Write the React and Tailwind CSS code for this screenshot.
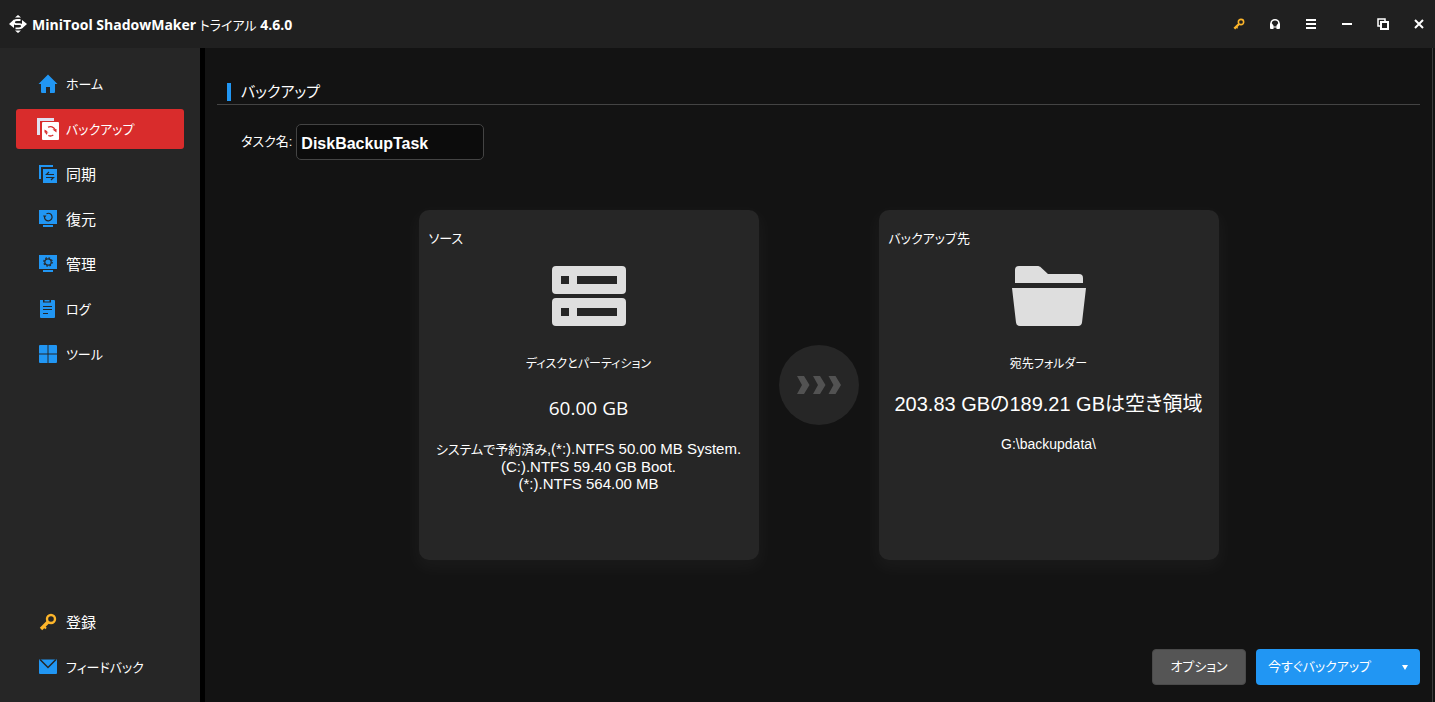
function Logo() {
  return (
    <svg width="18" height="18" viewBox="0 0 18 18" fill="#fff" aria-hidden="true">
      <path d="M6 2.500 9 0l3 2.500zM6 15.500 9 18l3-2.500z" />
      <path d="M0 9 5 4.500V13zM18 9l-5 4.500V5z" />
      <path d="M11.500 5H8C6 5 5 6 5 7.300S6 9.200 7.500 9.200h3c1.500 0 2.500.5 2.500 1.800s-1 2.300-3 2.300H6.500" fill="none" stroke="#fff" strokeWidth="1.800" />
    </svg>
  )
}

function KeyIcon({ size }) {
  return (
    <svg width={size} height={size} viewBox="0 0 18 18" fill="none" stroke="#fdb52a" aria-hidden="true">
      <circle cx="12" cy="6" r="4" strokeWidth="2.400" />
      <path d="M9 9 2 16" strokeWidth="3.400" />
      <path d="m4.500 13 2.500 2.500" strokeWidth="2" />
    </svg>
  )
}

function HomeIcon() {
  return (
    <svg width="20" height="20" viewBox="0 0 20 20" fill="#2196f3" aria-hidden="true">
      <path d="M10 .5.500 10H3v7.500c0 1 .5 1.500 1.500 1.500H8v-6h4v6h3.500c1 0 1.500-.5 1.500-1.500V10h2.500z" />
    </svg>
  )
}

function BackupIcon() {
  return (
    <svg width="22" height="22" viewBox="0 0 22 22" aria-hidden="true">
      <path d="M0 0h17v3H3v14H0z" fill="#e0e0f0" />
      <rect x="5" y="4" width="17" height="18" rx="1" fill="#fff" />
      <path d="M11 9.200a5 5 0 0 1 7 2.300M8.700 12.500a5 5 0 0 0 1.300 3.700M16.300 17a5 5 0 0 1-5 .5" fill="none" stroke="#d92c2c" strokeWidth="1.300" />
      <path d="m15.500 11.500 4 3v-3.500zM11.500 14.500 7.500 11.500v3z" fill="#d92c2c" />
    </svg>
  )
}

function SyncIcon() {
  return (
    <svg width="18" height="18" viewBox="0 0 18 18" aria-hidden="true">
      <path d="M0 0h14v2H2v12H0z" fill="#2196f3" />
      <path d="M4 4h14v14H4z" fill="#2196f3" />
      <path d="M15 9.500H7.500L10 7M7 12.500h7.500L12 15" fill="none" stroke="#262626" strokeWidth="1.200" />
    </svg>
  )
}

function RestoreIcon() {
  return (
    <svg width="18" height="18" viewBox="0 0 18 18" aria-hidden="true">
      <path d="M0 0h18v14H0zM4 15h10v2H4z" fill="#2196f3" />
      <path d="M7.500 3.700a3.800 3.800 0 1 1-2 3" fill="none" stroke="#262626" strokeWidth="1.200" />
      <path d="M4 5.500h3.500L5.500 8z" fill="#262626" />
    </svg>
  )
}

function ManageIcon() {
  return (
    <svg width="18" height="18" viewBox="0 0 18 18" aria-hidden="true">
      <path d="M0 0h18v14H0zM4 15h10v2H4z" fill="#2196f3" />
      <circle cx="9" cy="7" r="3.200" fill="none" stroke="#262626" strokeWidth="1.200" />
      <circle cx="9" cy="7" r="4.200" fill="none" stroke="#262626" strokeWidth="1.200" strokeDasharray="1.650 1.650" />
    </svg>
  )
}

function LogIcon() {
  return (
    <svg width="18" height="18" viewBox="0 0 18 18" aria-hidden="true">
      <path d="M1 0h3v2.500h8V0h3a1 1 0 0 1 1 1v16a1 1 0 0 1-1 1H2a1 1 0 0 1-1-1zM5.500 0h5v1.500h-5z" fill="#2196f3" />
      <path d="M4 6.500h9M4 9.500h9M4 13.500h5" stroke="#262626" strokeWidth="1.200" />
    </svg>
  )
}

function ToolsIcon() {
  return (
    <svg width="18" height="18" viewBox="0 0 18 18" fill="#2196f3" aria-hidden="true">
      <path d="M0 1a1 1 0 0 1 1-1h7.500v8.500H0zM9.500 0H17a1 1 0 0 1 1 1v7.500H9.500zM0 9.500h8.500V18H1a1 1 0 0 1-1-1zM9.500 9.500H18V17a1 1 0 0 1-1 1H9.500z" />
    </svg>
  )
}

function MailIcon() {
  return (
    <svg width="18" height="16" viewBox="0 0 18 16" aria-hidden="true">
      <path d="M0 .5h18V14a1 1 0 0 1-1 1H1a1 1 0 0 1-1-1z" fill="#2196f3" />
      <path d="m1 .5 8 8 8-8" fill="none" stroke="#262626" strokeWidth="1.500" />
    </svg>
  )
}

function DiskIcon() {
  return (
    <svg width="74" height="60" viewBox="0 0 74 60" fill="#dedede" fillRule="evenodd" aria-hidden="true">
      <path d="M4 0h66a4 4 0 0 1 4 4v20a4 4 0 0 1-4 4H4a4 4 0 0 1-4-4V4a4 4 0 0 1 4-4zM9 10v8h8v-8zM25 10v8h40v-8z" />
      <path d="M4 32h66a4 4 0 0 1 4 4v20a4 4 0 0 1-4 4H4a4 4 0 0 1-4-4V36a4 4 0 0 1 4-4zM9 42v8h8v-8zM25 42v8h40v-8z" />
    </svg>
  )
}

function FolderIcon() {
  return (
    <svg width="74" height="60" viewBox="0 0 74 60" fill="#dedede" aria-hidden="true">
      <path d="M3 17V4a4 4 0 0 1 4-4h18c2 0 3 .5 4 1.500L36 8h31a4 4 0 0 1 4 4v5z" />
      <path d="M0 22h74l-4 34.500a4 4 0 0 1-4 3.500H8a4 4 0 0 1-4-3.500z" />
    </svg>
  )
}

function ArrowsIcon() {
  return (
    <svg width="44" height="18" viewBox="0 0 44 18" fill="#525252" aria-hidden="true">
      <path d="M0 0h7l5.500 9L7 18H0l5-9zM16 0h7l5.500 9-5.500 9h-7l5-9zM31.500 0h7L44 9l-5.500 9h-7l5-9z" />
    </svg>
  )
}

const windowButtons = [
  { label: '登録キー', icon: <KeyIcon size={12} /> },
  {
    label: 'サポート',
    icon: (
      <svg width="10" height="10" viewBox="0 0 10 10" fill="none" stroke="#fff" aria-hidden="true">
        <path d="M1 7V4.500a4 3.700 0 0 1 8 0V7" strokeWidth="1.600" />
        <path d="M0 4.500h2l1.500 2V10H1a1 1 0 0 1-1-1zM10 4.500H8l-1.500 2V10H9a1 1 0 0 0 1-1z" fill="#fff" stroke="none" />
        <path d="M3 8h4" />
      </svg>
    ),
  },
  {
    label: 'メニュー',
    icon: (
      <svg width="10" height="10" viewBox="0 0 10 10" stroke="#fff" strokeWidth="2" aria-hidden="true">
        <path d="M0 1h10M0 5h10M0 9h10" />
      </svg>
    ),
  },
  {
    label: '最小化',
    icon: (
      <svg width="10" height="10" viewBox="0 0 10 10" stroke="#fff" strokeWidth="2" aria-hidden="true">
        <path d="M0 5h10" />
      </svg>
    ),
  },
  {
    label: '元に戻す',
    icon: (
      <svg width="12" height="12" viewBox="0 0 12 12" fill="none" stroke="#fff" aria-hidden="true">
        <path d="M3 8H1V1h7v2" strokeWidth="1.500" />
        <rect x="4" y="4" width="7" height="7" strokeWidth="2" />
      </svg>
    ),
  },
  {
    label: '閉じる',
    icon: (
      <svg width="10" height="10" viewBox="0 0 10 10" stroke="#fff" strokeWidth="2" aria-hidden="true">
        <path d="m1 1 8 8M9 1 1 9" />
      </svg>
    ),
  },
]

const mainNav = [
  { label: 'ホーム', icon: <HomeIcon />, size: 'text-[13px]' },
  { label: 'バックアップ', icon: <BackupIcon />, size: 'text-[13px]', active: true },
  { label: '同期', icon: <SyncIcon />, size: 'text-[15px]' },
  { label: '復元', icon: <RestoreIcon />, size: 'text-[15px]' },
  { label: '管理', icon: <ManageIcon />, size: 'text-[15px]' },
  { label: 'ログ', icon: <LogIcon />, size: 'text-[13px]' },
  { label: 'ツール', icon: <ToolsIcon />, size: 'text-[13px]' },
]

const bottomNav = [
  { label: '登録', icon: <KeyIcon size={18} />, size: 'text-[15px]' },
  { label: 'フィードバック', icon: <MailIcon />, size: 'text-[13px]' },
]

function NavList({ items }) {
  return (
    <ul className="flex flex-col gap-[5px]">
      {items.map((item) => (
        <li key={item.label}>
          <a
            href="#"
            aria-current={item.active ? 'page' : undefined}
            className={`flex h-10 items-center gap-[7px] rounded-[3px] pl-[21px] ${item.size} ${item.active ? 'bg-[#d92c2c]' : ''}`}
          >
            <span className="flex w-[22px] shrink-0 justify-center">{item.icon}</span>
            <span className="pt-[2px]">{item.label}</span>
          </a>
        </li>
      ))}
    </ul>
  )
}

function Card({ title, icon, name, children }) {
  return (
    <section className="flex min-h-[350px] w-[340px] flex-col items-center rounded-[10px] bg-[#262626] pt-[18px] shadow-[0_6px_16px_4px_rgba(255,255,255,0.03)]">
      <h2 className="mb-4 self-start pl-[10px] text-[13px] leading-[22px]">{title}</h2>
      {icon}
      <p className="mt-7 text-[12px] leading-5">{name}</p>
      {children}
    </section>
  )
}

export default function App() {
  return (
    <div className="flex min-h-screen flex-col bg-[#131313] font-['Liberation_Sans','Noto_Sans_CJK_JP',sans-serif] text-white [font-feature-settings:'palt']">
      <header className="flex h-12 items-center justify-between bg-[#202020] pl-[9px]">
        <div className="flex items-center gap-[5px]">
          <Logo />
          <h1 className="pt-px font-['Open_Sans','Noto_Sans_CJK_JP',sans-serif] text-sm font-bold">
            MiniTool ShadowMaker <span className="text-[13px] font-normal">トライアル</span> 4.6.0
          </h1>
        </div>
        <div className="flex gap-1">
          {windowButtons.map((button) => (
            <button key={button.label} type="button" aria-label={button.label} className="flex size-8 items-center justify-center">
              {button.icon}
            </button>
          ))}
        </div>
      </header>

      <div className="flex flex-1">
        <nav className="flex w-[205px] shrink-0 flex-col justify-between border-r-5 border-black bg-[#262626] px-4 pt-4 pb-[15px]">
          <NavList items={mainNav} />
          <NavList items={bottomNav} />
        </nav>

        <main className="mr-[2px] flex flex-1 flex-col border-r border-[#3c3c3c] pt-[30px] pr-3 pb-[17px] pl-3">
          <div className="flex h-[27px] items-center gap-[10px] border-b border-[#444] pt-[2px] pl-[10px]">
            <span className="h-[18px] w-1 bg-[#2196f3]" />
            <h2 className="text-[15px] leading-6">バックアップ</h2>
          </div>

          <div className="mt-[19px] flex items-center gap-1 pl-6">
            <label htmlFor="task-name" className="text-[13px]">タスク名:</label>
            <input
              id="task-name"
              type="text"
              defaultValue="DiskBackupTask"
              className="h-9 w-[188px] rounded-[5px] border border-[#444] bg-[#0c0c0c] px-1 pt-[3px] text-base font-bold"
            />
          </div>

          <div className="mt-[50px] flex items-center justify-center gap-5">
            <Card title="ソース" icon={<DiskIcon />} name="ディスクとパーティション">
              <p className="mt-5 font-['Open_Sans',sans-serif] text-[19px] leading-7">60.00 GB</p>
              <p className="mt-[18px] text-center text-[15px] leading-[17px]">
                <span className="text-[13px]">システムで予約済み</span>,(*:).NTFS 50.00 MB System.
                <br />
                (C:).NTFS 59.40 GB Boot.
                <br />
                (*:).NTFS 564.00 MB
              </p>
            </Card>
            <div className="flex size-20 items-center justify-center rounded-full bg-[#262626]">
              <ArrowsIcon />
            </div>
            <Card title="バックアップ先" icon={<FolderIcon />} name="宛先フォルダー">
              <p className="mt-4 text-xl leading-7">203.83 GBの189.21 GBは空き領域</p>
              <p className="mt-4 text-sm leading-5">G:\backupdata\</p>
            </Card>
          </div>

          <div className="mt-auto flex justify-end gap-[10px] text-[13px]">
            <button type="button" className="h-9 w-[94px] rounded-[4px] border border-[#4a4a4a] bg-[#555]">
              オプション
            </button>
            <button type="button" className="flex h-9 w-[164px] items-center justify-between rounded-[4px] bg-[#2196f3] px-3">
              今すぐバックアップ
              <svg width="6" height="5" viewBox="0 0 6 5" fill="#fff" aria-hidden="true">
                <path d="M0 0h6L3 5z" />
              </svg>
            </button>
          </div>
        </main>
      </div>
    </div>
  )
}
